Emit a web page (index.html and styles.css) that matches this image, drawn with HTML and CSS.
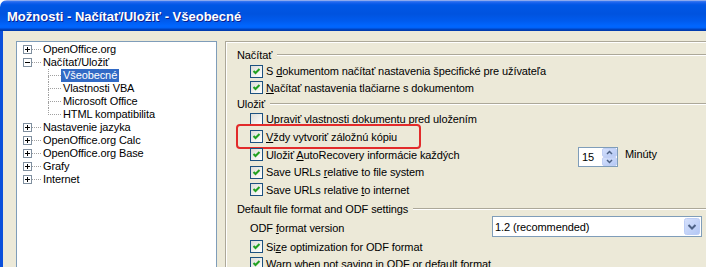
FILE: index.html
```html
<!DOCTYPE html>
<html>
<head>
<meta charset="utf-8">
<title>Možnosti</title>
<link rel="stylesheet" href="styles.css">
</head>
<body>
<div class="window">
  <div class="titlebar"><span class="title">Možnosti - Načítať/Uložiť - Všeobecné</span></div>
  <div class="client">
    <div class="tree">
      <div class="node"><svg class="exp" width="9" height="9" viewBox="0 0 9 9"><rect x="0.5" y="0.5" width="8" height="8" fill="#fff" stroke="#7F8F9F"/><path d="M2 4.5h5M4.5 2v5" stroke="#000" stroke-width="1"/></svg><span class="hline"></span><span class="label">OpenOffice.org</span></div>
      <div class="node"><svg class="exp" width="9" height="9" viewBox="0 0 9 9"><rect x="0.5" y="0.5" width="8" height="8" fill="#fff" stroke="#7F8F9F"/><path d="M2 4.5h5" stroke="#000" stroke-width="1"/></svg><span class="hline"></span><span class="label">Načítať/Uložiť</span></div>
      <div class="node child"><span class="branch"><span class="b-top"></span><span class="b-bot"></span></span><span class="label sel">Všeobecné</span></div>
      <div class="node child"><span class="branch"><span class="b-top"></span><span class="b-bot"></span></span><span class="label">Vlastnosti VBA</span></div>
      <div class="node child"><span class="branch"><span class="b-top"></span><span class="b-bot"></span></span><span class="label">Microsoft Office</span></div>
      <div class="node child last"><span class="branch"><span class="b-top"></span><span class="b-bot"></span></span><span class="label">HTML kompatibilita</span></div>
      <div class="node"><svg class="exp" width="9" height="9" viewBox="0 0 9 9"><rect x="0.5" y="0.5" width="8" height="8" fill="#fff" stroke="#7F8F9F"/><path d="M2 4.5h5M4.5 2v5" stroke="#000" stroke-width="1"/></svg><span class="hline"></span><span class="label">Nastavenie jazyka</span></div>
      <div class="node"><svg class="exp" width="9" height="9" viewBox="0 0 9 9"><rect x="0.5" y="0.5" width="8" height="8" fill="#fff" stroke="#7F8F9F"/><path d="M2 4.5h5M4.5 2v5" stroke="#000" stroke-width="1"/></svg><span class="hline"></span><span class="label">OpenOffice.org Calc</span></div>
      <div class="node"><svg class="exp" width="9" height="9" viewBox="0 0 9 9"><rect x="0.5" y="0.5" width="8" height="8" fill="#fff" stroke="#7F8F9F"/><path d="M2 4.5h5M4.5 2v5" stroke="#000" stroke-width="1"/></svg><span class="hline"></span><span class="label">OpenOffice.org Base</span></div>
      <div class="node"><svg class="exp" width="9" height="9" viewBox="0 0 9 9"><rect x="0.5" y="0.5" width="8" height="8" fill="#fff" stroke="#7F8F9F"/><path d="M2 4.5h5M4.5 2v5" stroke="#000" stroke-width="1"/></svg><span class="hline"></span><span class="label">Grafy</span></div>
      <div class="node"><svg class="exp" width="9" height="9" viewBox="0 0 9 9"><rect x="0.5" y="0.5" width="8" height="8" fill="#fff" stroke="#7F8F9F"/><path d="M2 4.5h5M4.5 2v5" stroke="#000" stroke-width="1"/></svg><span class="hline"></span><span class="label">Internet</span></div>
    </div>
    <div class="page">
      <div class="group g1"><span>Načítať</span><span class="rule"></span></div>
      <div class="row h16"><span class="cb"><svg width="11" height="11" viewBox="0 0 11 11"><polyline points="2.5,5 4.5,7 8.5,3" fill="none" stroke="#21A121" stroke-width="2"/></svg></span><span>S <u>d</u>okumentom načítať nastavenia špecifické pre užívateľa</span></div>
      <div class="row h17"><span class="cb"><svg width="11" height="11" viewBox="0 0 11 11"><polyline points="2.5,5 4.5,7 8.5,3" fill="none" stroke="#21A121" stroke-width="2"/></svg></span><span><u>N</u>ačítať nastavenia tlačiarne s dokumentom</span></div>
      <div class="group g2"><span>Uložiť</span><span class="rule"></span></div>
      <div class="row h16"><span class="cb"></span><span><u>U</u>praviť vlastnosti dokumentu pred uložením</span></div>
      <div class="row h19 marked"><span class="cb"><svg width="11" height="11" viewBox="0 0 11 11"><polyline points="2.5,5 4.5,7 8.5,3" fill="none" stroke="#21A121" stroke-width="2"/></svg></span><span><u>V</u>ždy vytvoriť záložnú kópiu</span></div>
      <div class="row h17"><span class="cb"><svg width="11" height="11" viewBox="0 0 11 11"><polyline points="2.5,5 4.5,7 8.5,3" fill="none" stroke="#21A121" stroke-width="2"/></svg></span><span class="autolabel">Uložiť <u>A</u>utoRecovery informácie každých</span><span class="spin"><span class="spin-val">15</span><svg class="spin-btn" width="15" height="18" viewBox="0 0 15 18"><defs><linearGradient id="sg" x1="0" y1="0" x2="1" y2="1"><stop offset="0" stop-color="#D6E1FC"/><stop offset="1" stop-color="#B3C7F4"/></linearGradient></defs><rect x="0.5" y="0.5" width="14" height="8" rx="1.5" fill="url(#sg)" stroke="#C0CFF4"/><rect x="0.5" y="9.5" width="14" height="8" rx="1.5" fill="url(#sg)" stroke="#C0CFF4"/><path d="M5 6 L7.5 3.5 L10 6" fill="none" stroke="#4D6185" stroke-width="1.5"/><path d="M5 12 L7.5 14.5 L10 12" fill="none" stroke="#4D6185" stroke-width="1.5"/></svg></span><span class="unit">Minúty</span></div>
      <div class="row h18"><span class="cb"><svg width="11" height="11" viewBox="0 0 11 11"><polyline points="2.5,5 4.5,7 8.5,3" fill="none" stroke="#21A121" stroke-width="2"/></svg></span><span>Save URLs <u>r</u>elative to file system</span></div>
      <div class="row h17"><span class="cb"><svg width="11" height="11" viewBox="0 0 11 11"><polyline points="2.5,5 4.5,7 8.5,3" fill="none" stroke="#21A121" stroke-width="2"/></svg></span><span>Save URLs relative <u>t</u>o internet</span></div>
      <div class="group g3"><span>Default file format and ODF settings</span><span class="rule"></span></div>
      <div class="row h20"><span class="odflabel">ODF <u>f</u>ormat version</span><span class="combo"><span class="combo-val">1.2 (recommended)</span><svg class="combo-btn" width="16" height="17" viewBox="0 0 16 17"><defs><linearGradient id="cg" x1="0" y1="0" x2="1" y2="1"><stop offset="0" stop-color="#D6E1FC"/><stop offset="1" stop-color="#B3C7F4"/></linearGradient></defs><rect x="0.5" y="0.5" width="15" height="16" rx="2" fill="url(#cg)" stroke="#BCCDF6"/><path d="M4.5 7 L8 10.5 L11.5 7" fill="none" stroke="#4D6185" stroke-width="2"/></svg></span></div>
      <div class="row h17"><span class="cb"><svg width="11" height="11" viewBox="0 0 11 11"><polyline points="2.5,5 4.5,7 8.5,3" fill="none" stroke="#21A121" stroke-width="2"/></svg></span><span>Si<u>z</u>e optimization for ODF format</span></div>
      <div class="row h17"><span class="cb"><svg width="11" height="11" viewBox="0 0 11 11"><polyline points="2.5,5 4.5,7 8.5,3" fill="none" stroke="#21A121" stroke-width="2"/></svg></span><span><u>W</u>arn when not saving in ODF or default format</span></div>
    </div>
  </div>
</div>
</body>
</html>
```

FILE: styles.css
```css
* { box-sizing: border-box; }
html, body { margin: 0; padding: 0; }
body {
  width: 706px;
  height: 267px;
  overflow: hidden;
  background: #fff;
  font-family: "Liberation Sans", Arial, sans-serif;
  font-size: 11px;
  letter-spacing: -0.1px;
  color: #000;
}
.window {
  width: 730px;
  height: 300px;
  display: flex;
  flex-direction: column;
}
.titlebar {
  height: 31px;
  flex: 0 0 31px;
  border-top-left-radius: 7px;
  background: linear-gradient(to bottom,
    #8CA9EE 0px, #8CA9EE 1px,
    #3A7AF2 1px, #145FEC 3px,
    #0057E5 5px, #0053DF 14px,
    #005BEE 21px, #0066FF 26px,
    #0062F8 28px, #0045C4 29px,
    #0038A8 31px);
  display: flex;
  align-items: center;
  padding-left: 7px;
  padding-top: 2px;
}
.title {
  color: #fff;
  font-family: "Liberation Sans", Arial, sans-serif;
  font-weight: bold;
  font-size: 13px;
  letter-spacing: 0;
  text-shadow: 1px 1px 0 #0A1E8E;
}
.client {
  flex: 1;
  background: #ECE9D8;
  border-left: 3px solid #0B50DB;
  display: flex;
  padding: 10px 0 0 13px;
  gap: 8px;
}
.tree {
  width: 201px;
  flex: 0 0 201px;
  background: #fff;
  border: 1px solid #7F9DB9;
  padding-top: 1px;
}
.node {
  height: 13px;
  display: flex;
  align-items: center;
  padding-left: 6px;
}
.exp { flex: 0 0 9px; display: block; }
.hline {
  width: 9px;
  height: 1px;
  border-top: 1px dotted #A0A0A0;
}
.label {
  padding: 0 2px;
  height: 13px;
  line-height: 13px;
  white-space: nowrap;
}
.label.sel {
  background: #316AC5;
  color: #fff;
}
.node.child { padding-left: 31px; align-items: stretch; }
.branch {
  width: 13px;
  display: flex;
  flex-direction: column;
}
.b-top {
  height: 7px;
  border-left: 1px dotted #A0A0A0;
  border-bottom: 1px dotted #A0A0A0;
}
.b-bot {
  flex: 1;
  border-left: 1px dotted #A0A0A0;
}
.node.last .b-bot { border-left: none; }

.page {
  flex: 1;
  border-top: 1px solid #ACA899;
  border-left: 1px solid #ACA899;
  box-shadow: inset 1px 1px 0 #fff;
  padding: 5px 0 0 11px;
  display: flex;
  flex-direction: column;
}
.group {
  display: flex;
  align-items: center;
  white-space: nowrap;
}
.g1 { height: 16px; }
.g2 { height: 15px; }
.g3 { height: 20px; padding-top: 2px; }
.rule {
  flex: 1;
  height: 2px;
  border-top: 1px solid #ACA899;
  border-bottom: 1px solid #fff;
  margin-left: 5px;
}
.row {
  display: flex;
  align-items: center;
  padding-left: 13px;
  white-space: nowrap;
  position: relative;
}
.h16 { height: 16px; }
.h17 { height: 17px; }
.h18 { height: 18px; }
.h19 { height: 19px; }
.h20 { height: 20px; }
.cb {
  flex: 0 0 13px;
  width: 13px;
  height: 13px;
  margin-right: 3px;
  border: 1px solid #1C5180;
  background: linear-gradient(135deg, #DCDCD7 0%, #F2F2EF 60%, #FFFFFF 100%);
  display: flex;
}
.cb svg { display: block; }
.marked::after {
  content: "";
  position: absolute;
  left: -1px;
  top: -3px;
  width: 181px;
  height: 21px;
  border: 2px solid #E22B2B;
  border-radius: 4px;
}
.autolabel { width: 312px; flex: 0 0 312px; }
.spin {
  width: 40px;
  height: 20px;
  margin-top: 5px;
  border: 1px solid #7F9DB9;
  background: #fff;
  display: flex;
  align-items: center;
  padding: 0 0 0 3px;
}
.spin-val { flex: 1; }
.spin-btn { display: block; }
.unit { margin-left: 7px; margin-top: -2px; }
.odflabel { width: 242px; flex: 0 0 242px; }
.combo {
  width: 210px;
  height: 21px;
  margin-top: -3px;
  border: 1px solid #7F9DB9;
  background: #fff;
  display: flex;
  align-items: center;
  padding: 1px 1px 1px 2px;
}
.combo-val { flex: 1; }
.combo-btn { display: block; }
```
